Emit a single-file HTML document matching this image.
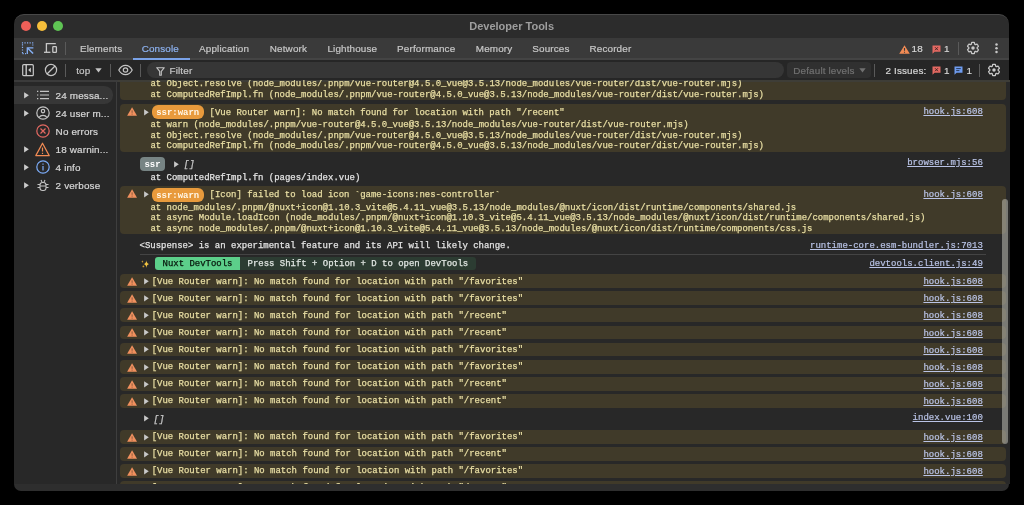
<!DOCTYPE html><html><head><meta charset="utf-8"><style>
*{margin:0;padding:0;box-sizing:border-box}
html,body{width:1024px;height:505px;overflow:hidden;background:#000}
body{position:relative;font-family:"Liberation Sans", sans-serif}
.a{position:absolute}
.win{position:absolute;left:14px;top:14px;width:995.3px;height:477px;border-radius:10px;background:#2d2d2d;overflow:hidden;box-shadow:inset 0 0 0 1px #3e3e3e}
.ui{font-family:"Liberation Sans", sans-serif;font-size:9.9px;letter-spacing:0.15px;white-space:nowrap;line-height:12px;-webkit-text-stroke:0.2px currentColor}
.m{font-family:"Liberation Mono", monospace;font-size:8.98px;white-space:pre;line-height:10.6px;-webkit-text-stroke:0.25px currentColor}
.wr{position:absolute;left:120.1px;width:885.9px;background:#403a29;border-radius:4px}
.wt{color:#e9dfa4}
.lk{position:absolute;font-family:"Liberation Mono", monospace;font-size:9px;white-space:pre;line-height:10.6px;color:#b9c3e6;text-decoration:underline;text-underline-offset:1px;-webkit-text-stroke:0.2px currentColor;right:26.7px}
</style></head><body><div style="position:absolute;left:0;top:0;width:1024px;height:505px;will-change:transform"><div class="a" style="left:14px;top:14px;width:995.3px;height:23.5px;background:#2c2c2c;border-radius:10px 10px 0 0;border-top:1px solid #484848"></div>
<div class="a" style="left:20.8px;top:20.8px;width:10.4px;height:10.4px;border-radius:50%;background:#ee5f58"></div>
<div class="a" style="left:37.0px;top:20.8px;width:10.4px;height:10.4px;border-radius:50%;background:#f6be3b"></div>
<div class="a" style="left:53.099999999999994px;top:20.8px;width:10.4px;height:10.4px;border-radius:50%;background:#5fc454"></div>
<div class="a" style="left:14px;top:18.5px;width:995.3px;text-align:center;font-weight:bold;font-size:11px;color:#9e9e9e;line-height:14px">Developer Tools</div>
<div class="a" style="left:14px;top:37.5px;width:995.3px;height:20.4px;background:#3a3a3a"></div>
<div class="a" style="left:14px;top:57.9px;width:995.3px;height:1.7px;background:#444444"></div>
<svg class="a" style="left:21px;top:41px" width="14" height="14" viewBox="0 0 14 14"><g fill="none" stroke="#86b0f5" stroke-width="1.2"><path d="M0.9 1.9H12.4M1.5 3.3V13.1M11.8 3.4V5M1.5 12.6H5" stroke-dasharray="1.2 1.35"/><path d="M6.3 13.1V6.8H12.4" stroke-width="1.3"/><path d="M6.8 7.3L12.1 12.6" stroke-width="1.45"/></g></svg>
<svg class="a" style="left:43px;top:41px" width="15" height="14" viewBox="0 0 15 14"><g fill="none" stroke="#c8c8c8" stroke-width="1.3"><path d="M3.4 11.2V2.6h9.4"/><path d="M1 11.3h6.4"/><rect x="9.8" y="5.6" width="3.6" height="5.8" rx="0.6"/></g></svg>
<div class="a" style="left:64.8px;top:42px;width:1px;height:13px;background:#5a5a5a"></div>
<div class="a ui" style="left:79.9px;top:42.5px;color:#c8c8c8">Elements</div>
<div class="a ui" style="left:141.70000000000002px;top:42.5px;color:#8db2f0">Console</div>
<div class="a ui" style="left:199.1px;top:42.5px;color:#c8c8c8">Application</div>
<div class="a ui" style="left:269.79999999999995px;top:42.5px;color:#c8c8c8">Network</div>
<div class="a ui" style="left:327.4px;top:42.5px;color:#c8c8c8">Lighthouse</div>
<div class="a ui" style="left:397.09999999999997px;top:42.5px;color:#c8c8c8">Performance</div>
<div class="a ui" style="left:475.79999999999995px;top:42.5px;color:#c8c8c8">Memory</div>
<div class="a ui" style="left:532.3px;top:42.5px;color:#c8c8c8">Sources</div>
<div class="a ui" style="left:589.5px;top:42.5px;color:#c8c8c8">Recorder</div>
<div class="a" style="left:133px;top:57.7px;width:56.7px;height:1.9px;background:#7aa2e8"></div>
<svg class="a" style="left:898.5px;top:44.5px" width="11" height="9" viewBox="0 0 11 9"><path d="M5.5 0.3L10.8 8.8H0.2Z" fill="#f28b54"/><path d="M5.5 3v2.8M5.5 6.8v1" stroke="#3a3a3a" stroke-width="1.1"/></svg>
<div class="a ui" style="left:911.5px;top:42.5px;color:#d6d6d6">18</div>
<svg class="a" style="left:932px;top:45px" width="9" height="9" viewBox="0 0 9 9"><path d="M0.5 0.5h8v6.3H2.6L0.5 8.7Z" fill="#e46962"/><path d="M3 2.2l3 3M6 2.2l-3 3" stroke="#3a2020" stroke-width="0.9"/></svg>
<div class="a ui" style="left:944px;top:42.5px;color:#d6d6d6">1</div>
<div class="a" style="left:958px;top:42px;width:1px;height:13px;background:#5a5a5a"></div>
<svg class="a" style="left:966.3px;top:41.3px" width="14" height="14" viewBox="0 0 24 24"><path d="M19.14 12.94c.04-.3.06-.61.06-.94 0-.32-.02-.64-.07-.94l2.03-1.58c.18-.14.23-.41.12-.61l-1.92-3.32c-.12-.22-.37-.29-.59-.22l-2.39.96c-.5-.38-1.03-.7-1.62-.94l-.36-2.54c-.04-.24-.24-.41-.48-.41h-3.84c-.24 0-.43.17-.47.41l-.36 2.54c-.59.24-1.13.57-1.620.94l-2.39-.96c-.22-.08-.47 0-.59.22L2.74 8.87c-.12.21-.08.47.12.61l2.03 1.58c-.05.3-.09.63-.09.94s.02.64.07.94l-2.03 1.58c-.18.14-.23.41-.12.61l1.92 3.32c.12.22.37.29.59.22l2.39-.96c.5.38 1.030.7 1.62.94l.36 2.54c.05.24.24.41.48.41h3.84c.24 0 .44-.17.47-.41l.36-2.54c.59-.24 1.13-.56 1.62-.94l2.39.96c.22.08.47 0 .59-.22l1.92-3.32c.12-.22.07-.47-.12-.61l-2.01-1.58z" fill="none" stroke="#cacaca" stroke-width="2.1" stroke-linejoin="round"/><circle cx="12" cy="12" r="3" fill="#cacaca"/></svg>
<svg class="a" style="left:994px;top:43px" width="5" height="11" viewBox="0 0 5 11"><circle cx="2.5" cy="1.6" r="1.25" fill="#c8c8c8"/><circle cx="2.5" cy="5.3" r="1.25" fill="#c8c8c8"/><circle cx="2.5" cy="9" r="1.25" fill="#c8c8c8"/></svg>
<div class="a" style="left:14px;top:59.6px;width:995.3px;height:20.6px;background:#262626"></div>
<div class="a" style="left:14px;top:80.2px;width:995.3px;height:1.4px;background:#3b3b3b"></div>
<svg class="a" style="left:21px;top:63px" width="14" height="14" viewBox="0 0 14 14"><g fill="none" stroke="#c8c8c8" stroke-width="1.2"><rect x="1.7" y="1.7" width="10.6" height="11" rx="1"/><path d="M5.2 1.7v11" stroke-width="1.4"/></g><path d="M9.9 4.6v5L7.2 7.1Z" fill="#c8c8c8"/></svg>
<svg class="a" style="left:43.5px;top:63px" width="14" height="14" viewBox="0 0 14 14"><g fill="none" stroke="#c4c4c4" stroke-width="1.2"><circle cx="7" cy="7" r="5.6"/><path d="M3 11L11 3"/></g></svg>
<div class="a" style="left:64.8px;top:64px;width:1px;height:13px;background:#5a5a5a"></div>
<div class="a ui" style="left:76.2px;top:65px;color:#c6c6c6">top</div>
<svg class="a" style="left:95px;top:68px" width="7" height="5" viewBox="0 0 7 5"><path d="M0.3 0.3h6.4L3.5 4.6Z" fill="#c4c4c4"/></svg>
<div class="a" style="left:110px;top:64px;width:1px;height:13px;background:#5a5a5a"></div>
<svg class="a" style="left:118px;top:64px" width="15" height="12" viewBox="0 0 15 12"><g fill="none" stroke="#c4c4c4" stroke-width="1.2"><path d="M0.8 6C2.5 2.8 4.8 1.3 7.5 1.3S12.5 2.8 14.2 6C12.5 9.2 10.2 10.7 7.5 10.7S2.5 9.2 0.8 6Z"/><circle cx="7.5" cy="6" r="2.2"/></g></svg>
<div class="a" style="left:140.1px;top:64px;width:1px;height:13px;background:#5a5a5a"></div>
<div class="a" style="left:147px;top:62px;width:636.6px;height:16px;border-radius:8px;background:#363636"></div>
<svg class="a" style="left:155.5px;top:66.5px" width="9" height="9" viewBox="0 0 9 9"><path d="M0.7 0.7h7.6L5.3 4.4V8.3H3.7V4.4Z" fill="none" stroke="#c4c4c4" stroke-width="1.1" stroke-linejoin="round"/></svg>
<div class="a ui" style="left:169.5px;top:65px;color:#c6c6c6">Filter</div>
<div class="a" style="left:786.6px;top:62px;width:84.6px;height:16px;border-radius:4px;background:#303030"></div>
<div class="a ui" style="left:793.3px;top:65px;color:#717171">Default levels</div>
<svg class="a" style="left:859px;top:68px" width="7" height="5" viewBox="0 0 7 5"><path d="M0.3 0.3h6.4L3.5 4.6Z" fill="#717171"/></svg>
<div class="a" style="left:874.2px;top:64px;width:1px;height:13px;background:#5a5a5a"></div>
<div class="a ui" style="left:885.5px;top:65px;color:#d6d6d6">2 Issues:</div>
<svg class="a" style="left:932px;top:66px" width="9" height="9" viewBox="0 0 9 9"><path d="M0.5 0.5h8v6.3H2.6L0.5 8.7Z" fill="#e46962"/><path d="M3 2.2l3 3M6 2.2l-3 3" stroke="#3a2020" stroke-width="0.9"/></svg>
<div class="a ui" style="left:944px;top:65px;color:#d6d6d6">1</div>
<svg class="a" style="left:954px;top:66px" width="9" height="9" viewBox="0 0 9 9"><path d="M0.5 0.5h8v6.3H2.6L0.5 8.7Z" fill="#6f9cf0"/><path d="M2.2 2.6h4.6M2.2 4.6h3.2" stroke="#20304a" stroke-width="0.9"/></svg>
<div class="a ui" style="left:966.5px;top:65px;color:#d6d6d6">1</div>
<div class="a" style="left:979.4px;top:64px;width:1px;height:13px;background:#5a5a5a"></div>
<svg class="a" style="left:986.8px;top:63.4px" width="14" height="14" viewBox="0 0 24 24"><path d="M19.14 12.94c.04-.3.06-.61.06-.94 0-.32-.02-.64-.07-.94l2.03-1.58c.18-.14.23-.41.12-.61l-1.92-3.32c-.12-.22-.37-.29-.59-.22l-2.39.96c-.5-.38-1.03-.7-1.62-.94l-.36-2.54c-.04-.24-.24-.41-.48-.41h-3.84c-.24 0-.43.17-.47.41l-.36 2.54c-.59.24-1.13.57-1.620.94l-2.39-.96c-.22-.08-.47 0-.59.22L2.74 8.87c-.12.21-.08.47.12.61l2.03 1.58c-.05.3-.09.63-.09.94s.02.64.07.94l-2.03 1.58c-.18.14-.23.41-.12.61l1.92 3.32c.12.22.37.29.59.22l2.39-.96c.5.38 1.030.7 1.62.94l.36 2.54c.05.24.24.41.48.41h3.84c.24 0 .44-.17.47-.41l.36-2.54c.59-.24 1.13-.56 1.62-.94l2.39.96c.22.08.47 0 .59-.22l1.92-3.32c.12-.22.07-.47-.12-.61l-2.01-1.58z" fill="none" stroke="#cacaca" stroke-width="2.1" stroke-linejoin="round"/><circle cx="12" cy="12" r="3" fill="#cacaca"/></svg>
<div class="a" style="left:14px;top:81.5px;width:103.5px;height:402.5px;background:#282828"></div>
<div class="a" style="left:116.1px;top:81.5px;width:1px;height:402.5px;background:#3e3e3e"></div>
<div class="a" style="left:14px;top:86.4px;width:99px;height:17.2px;border-radius:0 8.6px 8.6px 0;background:#373737"></div>
<svg class="a" style="left:24px;top:91.7px" width="5" height="7" viewBox="0 0 5 7"><path d="M0.1 0.2L4.9 3.3L0.1 6.4Z" fill="#cccccc"/></svg>
<div class="a ui" style="left:55.6px;top:89.8px;color:#d8d8d8">24 messa...</div>
<svg class="a" style="left:35.5px;top:88px" width="14" height="14" viewBox="0 0 14 14"><g stroke="#c4c4c4" stroke-width="1.2"><path d="M1 3.3h1.3M1 7h1.3M1 10.7h1.3M4 3.3h9M4 7h9M4 10.7h9"/></g></svg>
<svg class="a" style="left:24px;top:109.7px" width="5" height="7" viewBox="0 0 5 7"><path d="M0.1 0.2L4.9 3.3L0.1 6.4Z" fill="#cccccc"/></svg>
<div class="a ui" style="left:55.6px;top:107.8px;color:#d8d8d8">24 user m...</div>
<svg class="a" style="left:35.5px;top:106px" width="14" height="14" viewBox="0 0 14 14"><g fill="none" stroke="#c4c4c4" stroke-width="1.2"><circle cx="7" cy="7" r="6.2"/><circle cx="7" cy="5.1" r="1.7"/><path d="M3.1 11.4c.9-1.4 2.2-2 3.9-2s3 .6 3.9 2"/></g></svg>
<div class="a ui" style="left:55.6px;top:125.8px;color:#d8d8d8">No errors</div>
<svg class="a" style="left:35.5px;top:124px" width="14" height="14" viewBox="0 0 14 14"><g fill="none" stroke="#e46962" stroke-width="1.2"><circle cx="7" cy="7" r="6.2"/><path d="M4.5 4.5l5 5M9.5 4.5l-5 5"/></g></svg>
<svg class="a" style="left:24px;top:145.7px" width="5" height="7" viewBox="0 0 5 7"><path d="M0.1 0.2L4.9 3.3L0.1 6.4Z" fill="#cccccc"/></svg>
<div class="a ui" style="left:55.6px;top:143.8px;color:#d8d8d8">18 warnin...</div>
<svg class="a" style="left:35.0px;top:141.5px" width="15" height="15" viewBox="0 0 15 15"><g fill="none" stroke="#f28b54" stroke-width="1.2" stroke-linejoin="round"><path d="M7.5 1.2L14.2 13.6H0.8Z"/><path d="M7.5 5.5v4M7.5 10.8v1.2"/></g></svg>
<svg class="a" style="left:24px;top:163.7px" width="5" height="7" viewBox="0 0 5 7"><path d="M0.1 0.2L4.9 3.3L0.1 6.4Z" fill="#cccccc"/></svg>
<div class="a ui" style="left:55.6px;top:161.8px;color:#d8d8d8">4 info</div>
<svg class="a" style="left:35.5px;top:160px" width="14" height="14" viewBox="0 0 14 14"><g fill="none" stroke="#7cacf8" stroke-width="1.2"><circle cx="7" cy="7" r="6.2"/><path d="M7 6v4.5M7 3.6v1.2"/></g></svg>
<svg class="a" style="left:24px;top:181.7px" width="5" height="7" viewBox="0 0 5 7"><path d="M0.1 0.2L4.9 3.3L0.1 6.4Z" fill="#cccccc"/></svg>
<div class="a ui" style="left:55.6px;top:179.8px;color:#d8d8d8">2 verbose</div>
<svg class="a" style="left:35.5px;top:178px" width="14" height="14" viewBox="0 0 14 14"><g fill="none" stroke="#c4c4c4" stroke-width="1.1"><rect x="4" y="4.5" width="6" height="8" rx="2.5"/><path d="M5 2l1 2M9 2l-1 2M1.5 6.5H4M10 6.5h2.5M1.5 9.5H4M10 9.5h2.5M4 8h6"/></g></svg>
<div class="a" style="left:118px;top:81.5px;width:891.5px;height:402.5px;background:#282828"></div>
<div class="a" style="left:14px;top:484px;width:995.3px;height:7px;background:#2e2e2e;border-radius:0 0 10px 10px"></div>
<div class="a" style="left:118px;top:80px;width:891.5px;height:404px;overflow:hidden">
<div class="wr" style="left:2.0999999999999943px;top:1.7999999999999972px;height:18.2px;border-radius:0 0 4px 4px"></div><div class="a" style="left:0;top:0;width:891.5px;height:1.8px;background:#3e3d37"></div><div class="a m" style="left:32.400000000000006px;top:-0.58px;color:#e9dfa4">at Object.resolve (node_modules/.pnpm/vue-router@4.5.0_vue@3.5.13/node_modules/vue-router/dist/vue-router.mjs)</div><div class="a m" style="left:32.400000000000006px;top:9.62px;color:#e9dfa4">at ComputedRefImpl.fn (node_modules/.pnpm/vue-router@4.5.0_vue@3.5.13/node_modules/vue-router/dist/vue-router.mjs)</div><div class="wr" style="left:2.0999999999999943px;top:24px;height:47.599999999999994px"></div><svg class="a" style="left:8.8px;top:27px" width="10.2" height="9" viewBox="0 0 10.2 9"><path d="M5.1 0.3L10.1 8.8H0.1Z" fill="#f0905e"/><path d="M5.1 3.4v2.4M5.1 6.6v1" stroke="#8a5a3c" stroke-width="1"/></svg><svg class="a" style="left:25.9px;top:28.999999999999993px" width="5" height="7" viewBox="0 0 5 7"><path d="M0.1 0.2L4.8 3.3L0.1 6.4Z" fill="#c8c8c8"/></svg><div class="a m" style="left:33.69999999999999px;top:25.400000000000006px;width:52.2px;height:14px;border-radius:6px;background:#e89a3c;color:#fff6e6;font-weight:bold;line-height:17.6px;padding-left:4.5px;-webkit-text-stroke:0">ssr:warn</div><div class="a m" style="left:91.5px;top:28.32px;color:#e9dfa4">[Vue Router warn]: No match found for location with path "/recent"</div><div class="lk" style="top:27.12px">hook.js:608</div><div class="a m" style="left:32.400000000000006px;top:40.02px;color:#e9dfa4">at warn (node_modules/.pnpm/vue-router@4.5.0_vue@3.5.13/node_modules/vue-router/dist/vue-router.mjs)</div><div class="a m" style="left:32.400000000000006px;top:50.62px;color:#e9dfa4">at Object.resolve (node_modules/.pnpm/vue-router@4.5.0_vue@3.5.13/node_modules/vue-router/dist/vue-router.mjs)</div><div class="a m" style="left:32.400000000000006px;top:61.22px;color:#e9dfa4">at ComputedRefImpl.fn (node_modules/.pnpm/vue-router@4.5.0_vue@3.5.13/node_modules/vue-router/dist/vue-router.mjs)</div><div class="a m" style="left:21.900000000000006px;top:77px;width:25.3px;height:14px;border-radius:4px;background:#778484;color:#ffffff;font-weight:bold;line-height:16px;text-align:center;-webkit-text-stroke:0">ssr</div><svg class="a" style="left:56.20000000000001px;top:80.9px" width="5" height="7" viewBox="0 0 5 7"><path d="M0.1 0.2L4.8 3.3L0.1 6.4Z" fill="#c8c8c8"/></svg><div class="a m" style="left:65.80000000000001px;top:79.91999999999999px;color:#c8c8c8;font-style:italic">[]</div><div class="lk" style="top:78.12px">browser.mjs:56</div><div class="a m" style="left:32.400000000000006px;top:93.22px;color:#e3e3e3">at ComputedRefImpl.fn (pages/index.vue)</div><div class="wr" style="left:2.0999999999999943px;top:106.4px;height:48.0px"></div><svg class="a" style="left:8.8px;top:109.4px" width="10.2" height="9" viewBox="0 0 10.2 9"><path d="M5.1 0.3L10.1 8.8H0.1Z" fill="#f0905e"/><path d="M5.1 3.4v2.4M5.1 6.6v1" stroke="#8a5a3c" stroke-width="1"/></svg><svg class="a" style="left:25.9px;top:111.4px" width="5" height="7" viewBox="0 0 5 7"><path d="M0.1 0.2L4.8 3.3L0.1 6.4Z" fill="#c8c8c8"/></svg><div class="a m" style="left:33.69999999999999px;top:107.80000000000001px;width:52.2px;height:14px;border-radius:6px;background:#e89a3c;color:#fff6e6;font-weight:bold;line-height:17.6px;padding-left:4.5px;-webkit-text-stroke:0">ssr:warn</div><div class="a m" style="left:91.5px;top:110.12px;color:#e9dfa4">[Icon] failed to load icon `game-icons:nes-controller`</div><div class="lk" style="top:109.52px">hook.js:608</div><div class="a m" style="left:32.400000000000006px;top:122.82px;color:#e9dfa4">at node_modules/.pnpm/@nuxt+icon@1.10.3_vite@5.4.11_vue@3.5.13/node_modules/@nuxt/icon/dist/runtime/components/shared.js</div><div class="a m" style="left:32.400000000000006px;top:133.42px;color:#e9dfa4">at async Module.loadIcon (node_modules/.pnpm/@nuxt+icon@1.10.3_vite@5.4.11_vue@3.5.13/node_modules/@nuxt/icon/dist/runtime/components/shared.js)</div><div class="a m" style="left:32.400000000000006px;top:144.02px;color:#e9dfa4">at async node_modules/.pnpm/@nuxt+icon@1.10.3_vite@5.4.11_vue@3.5.13/node_modules/@nuxt/icon/dist/runtime/components/css.js</div><div class="a m" style="left:21.5px;top:161.32px;color:#e3e3e3">&lt;Suspense&gt; is an experimental feature and its API will likely change.</div><div class="lk" style="top:161.12px">runtime-core.esm-bundler.js:7013</div><div class="a" style="left:22px;top:173.5px;width:845.5px;height:1px;background:#444444"></div><svg class="a" style="left:21.5px;top:178.5px" width="10" height="10" viewBox="0 0 10 10"><path d="M6.4 1.2Q6.6 4.5 9.2 5Q6.6 5.5 6.4 9Q6.2 5.5 3.6 5Q6.2 4.5 6.4 1.2Z" fill="#f4c542"/><path d="M2.4 1.2Q2.5 2.4 3.5 2.6Q2.5 2.8 2.4 4Q2.3 2.8 1.3 2.6Q2.3 2.4 2.4 1.2Z" fill="#d6a838"/><circle cx="3.4" cy="7.4" r="0.9" fill="#c99a30"/></svg><div class="a" style="left:36.900000000000006px;top:176.89999999999998px;width:85.1px;height:12.9px;border-radius:3px 0 0 3px;background:#5ccf8a"></div><div class="a" style="left:122px;top:176.89999999999998px;width:235.6px;height:12.9px;border-radius:0 3px 3px 0;background:#2c3c32"></div><div class="a m" style="left:44.5px;top:179.42px;color:#07160c">Nuxt DevTools</div><div class="a m" style="left:129.5px;top:179.42px;color:#e0e6e2">Press Shift + Option + D to open DevTools</div><div class="lk" style="top:178.62px">devtools.client.js:49</div><div class="wr" style="left:2.0999999999999943px;top:194.2px;height:13.899999999999977px"></div><svg class="a" style="left:8.8px;top:197.0px" width="10.2" height="9" viewBox="0 0 10.2 9"><path d="M5.1 0.3L10.1 8.8H0.1Z" fill="#f0905e"/><path d="M5.1 3.4v2.4M5.1 6.6v1" stroke="#8a5a3c" stroke-width="1"/></svg><svg class="a" style="left:25.9px;top:197.99999999999997px" width="5" height="7" viewBox="0 0 5 7"><path d="M0.1 0.2L4.8 3.3L0.1 6.4Z" fill="#c8c8c8"/></svg><div class="a m" style="left:33.69999999999999px;top:196.72px;color:#e9dfa4">[Vue Router warn]: No match found for location with path "/favorites"</div><div class="lk" style="top:197.22px">hook.js:608</div><div class="wr" style="left:2.0999999999999943px;top:211.3px;height:13.899999999999977px"></div><svg class="a" style="left:8.8px;top:214.10000000000002px" width="10.2" height="9" viewBox="0 0 10.2 9"><path d="M5.1 0.3L10.1 8.8H0.1Z" fill="#f0905e"/><path d="M5.1 3.4v2.4M5.1 6.6v1" stroke="#8a5a3c" stroke-width="1"/></svg><svg class="a" style="left:25.9px;top:215.1px" width="5" height="7" viewBox="0 0 5 7"><path d="M0.1 0.2L4.8 3.3L0.1 6.4Z" fill="#c8c8c8"/></svg><div class="a m" style="left:33.69999999999999px;top:213.82px;color:#e9dfa4">[Vue Router warn]: No match found for location with path "/favorites"</div><div class="lk" style="top:214.32px">hook.js:608</div><div class="wr" style="left:2.0999999999999943px;top:228.39999999999998px;height:13.899999999999977px"></div><svg class="a" style="left:8.8px;top:231.2px" width="10.2" height="9" viewBox="0 0 10.2 9"><path d="M5.1 0.3L10.1 8.8H0.1Z" fill="#f0905e"/><path d="M5.1 3.4v2.4M5.1 6.6v1" stroke="#8a5a3c" stroke-width="1"/></svg><svg class="a" style="left:25.9px;top:232.19999999999996px" width="5" height="7" viewBox="0 0 5 7"><path d="M0.1 0.2L4.8 3.3L0.1 6.4Z" fill="#c8c8c8"/></svg><div class="a m" style="left:33.69999999999999px;top:230.92px;color:#e9dfa4">[Vue Router warn]: No match found for location with path "/recent"</div><div class="lk" style="top:231.42px">hook.js:608</div><div class="wr" style="left:2.0999999999999943px;top:245.5px;height:13.899999999999977px"></div><svg class="a" style="left:8.8px;top:248.3px" width="10.2" height="9" viewBox="0 0 10.2 9"><path d="M5.1 0.3L10.1 8.8H0.1Z" fill="#f0905e"/><path d="M5.1 3.4v2.4M5.1 6.6v1" stroke="#8a5a3c" stroke-width="1"/></svg><svg class="a" style="left:25.9px;top:249.29999999999998px" width="5" height="7" viewBox="0 0 5 7"><path d="M0.1 0.2L4.8 3.3L0.1 6.4Z" fill="#c8c8c8"/></svg><div class="a m" style="left:33.69999999999999px;top:248.02px;color:#e9dfa4">[Vue Router warn]: No match found for location with path "/recent"</div><div class="lk" style="top:248.52px">hook.js:608</div><div class="wr" style="left:2.0999999999999943px;top:262.6px;height:13.899999999999977px"></div><svg class="a" style="left:8.8px;top:265.40000000000003px" width="10.2" height="9" viewBox="0 0 10.2 9"><path d="M5.1 0.3L10.1 8.8H0.1Z" fill="#f0905e"/><path d="M5.1 3.4v2.4M5.1 6.6v1" stroke="#8a5a3c" stroke-width="1"/></svg><svg class="a" style="left:25.9px;top:266.4px" width="5" height="7" viewBox="0 0 5 7"><path d="M0.1 0.2L4.8 3.3L0.1 6.4Z" fill="#c8c8c8"/></svg><div class="a m" style="left:33.69999999999999px;top:265.12px;color:#e9dfa4">[Vue Router warn]: No match found for location with path "/favorites"</div><div class="lk" style="top:265.62px">hook.js:608</div><div class="wr" style="left:2.0999999999999943px;top:279.7px;height:13.899999999999977px"></div><svg class="a" style="left:8.8px;top:282.5px" width="10.2" height="9" viewBox="0 0 10.2 9"><path d="M5.1 0.3L10.1 8.8H0.1Z" fill="#f0905e"/><path d="M5.1 3.4v2.4M5.1 6.6v1" stroke="#8a5a3c" stroke-width="1"/></svg><svg class="a" style="left:25.9px;top:283.49999999999994px" width="5" height="7" viewBox="0 0 5 7"><path d="M0.1 0.2L4.8 3.3L0.1 6.4Z" fill="#c8c8c8"/></svg><div class="a m" style="left:33.69999999999999px;top:282.22px;color:#e9dfa4">[Vue Router warn]: No match found for location with path "/favorites"</div><div class="lk" style="top:282.72px">hook.js:608</div><div class="wr" style="left:2.0999999999999943px;top:296.8px;height:13.899999999999977px"></div><svg class="a" style="left:8.8px;top:299.6px" width="10.2" height="9" viewBox="0 0 10.2 9"><path d="M5.1 0.3L10.1 8.8H0.1Z" fill="#f0905e"/><path d="M5.1 3.4v2.4M5.1 6.6v1" stroke="#8a5a3c" stroke-width="1"/></svg><svg class="a" style="left:25.9px;top:300.59999999999997px" width="5" height="7" viewBox="0 0 5 7"><path d="M0.1 0.2L4.8 3.3L0.1 6.4Z" fill="#c8c8c8"/></svg><div class="a m" style="left:33.69999999999999px;top:299.32px;color:#e9dfa4">[Vue Router warn]: No match found for location with path "/recent"</div><div class="lk" style="top:299.82px">hook.js:608</div><div class="wr" style="left:2.0999999999999943px;top:313.9px;height:13.899999999999977px"></div><svg class="a" style="left:8.8px;top:316.7px" width="10.2" height="9" viewBox="0 0 10.2 9"><path d="M5.1 0.3L10.1 8.8H0.1Z" fill="#f0905e"/><path d="M5.1 3.4v2.4M5.1 6.6v1" stroke="#8a5a3c" stroke-width="1"/></svg><svg class="a" style="left:25.9px;top:317.69999999999993px" width="5" height="7" viewBox="0 0 5 7"><path d="M0.1 0.2L4.8 3.3L0.1 6.4Z" fill="#c8c8c8"/></svg><div class="a m" style="left:33.69999999999999px;top:316.42px;color:#e9dfa4">[Vue Router warn]: No match found for location with path "/recent"</div><div class="lk" style="top:316.92px">hook.js:608</div><svg class="a" style="left:25.9px;top:335.0px" width="5" height="7" viewBox="0 0 5 7"><path d="M0.1 0.2L4.8 3.3L0.1 6.4Z" fill="#c8c8c8"/></svg><div class="a m" style="left:35.5px;top:334.62px;color:#c8c8c8;font-style:italic">[]</div><div class="lk" style="top:333.12px">index.vue:100</div><div class="wr" style="left:2.0999999999999943px;top:349.7px;height:13.899999999999977px"></div><svg class="a" style="left:8.8px;top:352.5px" width="10.2" height="9" viewBox="0 0 10.2 9"><path d="M5.1 0.3L10.1 8.8H0.1Z" fill="#f0905e"/><path d="M5.1 3.4v2.4M5.1 6.6v1" stroke="#8a5a3c" stroke-width="1"/></svg><svg class="a" style="left:25.9px;top:353.49999999999994px" width="5" height="7" viewBox="0 0 5 7"><path d="M0.1 0.2L4.8 3.3L0.1 6.4Z" fill="#c8c8c8"/></svg><div class="a m" style="left:33.69999999999999px;top:352.22px;color:#e9dfa4">[Vue Router warn]: No match found for location with path "/favorites"</div><div class="lk" style="top:352.72px">hook.js:608</div><div class="wr" style="left:2.0999999999999943px;top:366.7px;height:13.899999999999977px"></div><svg class="a" style="left:8.8px;top:369.5px" width="10.2" height="9" viewBox="0 0 10.2 9"><path d="M5.1 0.3L10.1 8.8H0.1Z" fill="#f0905e"/><path d="M5.1 3.4v2.4M5.1 6.6v1" stroke="#8a5a3c" stroke-width="1"/></svg><svg class="a" style="left:25.9px;top:370.49999999999994px" width="5" height="7" viewBox="0 0 5 7"><path d="M0.1 0.2L4.8 3.3L0.1 6.4Z" fill="#c8c8c8"/></svg><div class="a m" style="left:33.69999999999999px;top:369.22px;color:#e9dfa4">[Vue Router warn]: No match found for location with path "/recent"</div><div class="lk" style="top:369.72px">hook.js:608</div><div class="wr" style="left:2.0999999999999943px;top:383.7px;height:13.899999999999977px"></div><svg class="a" style="left:8.8px;top:386.5px" width="10.2" height="9" viewBox="0 0 10.2 9"><path d="M5.1 0.3L10.1 8.8H0.1Z" fill="#f0905e"/><path d="M5.1 3.4v2.4M5.1 6.6v1" stroke="#8a5a3c" stroke-width="1"/></svg><svg class="a" style="left:25.9px;top:387.49999999999994px" width="5" height="7" viewBox="0 0 5 7"><path d="M0.1 0.2L4.8 3.3L0.1 6.4Z" fill="#c8c8c8"/></svg><div class="a m" style="left:33.69999999999999px;top:386.22px;color:#e9dfa4">[Vue Router warn]: No match found for location with path "/favorites"</div><div class="lk" style="top:386.72px">hook.js:608</div><div class="wr" style="left:2.0999999999999943px;top:400.7px;height:13.899999999999977px"></div><svg class="a" style="left:8.8px;top:403.5px" width="10.2" height="9" viewBox="0 0 10.2 9"><path d="M5.1 0.3L10.1 8.8H0.1Z" fill="#f0905e"/><path d="M5.1 3.4v2.4M5.1 6.6v1" stroke="#8a5a3c" stroke-width="1"/></svg><svg class="a" style="left:25.9px;top:404.49999999999994px" width="5" height="7" viewBox="0 0 5 7"><path d="M0.1 0.2L4.8 3.3L0.1 6.4Z" fill="#c8c8c8"/></svg><div class="a m" style="left:33.69999999999999px;top:403.22px;color:#e9dfa4">[Vue Router warn]: No match found for location with path "/recent"</div><div class="lk" style="top:403.72px">hook.js:608</div><div class="a" style="left:884px;top:119px;width:6px;height:245px;border-radius:3px;background:rgba(190,190,180,0.55)"></div>
</div></div></body></html>
